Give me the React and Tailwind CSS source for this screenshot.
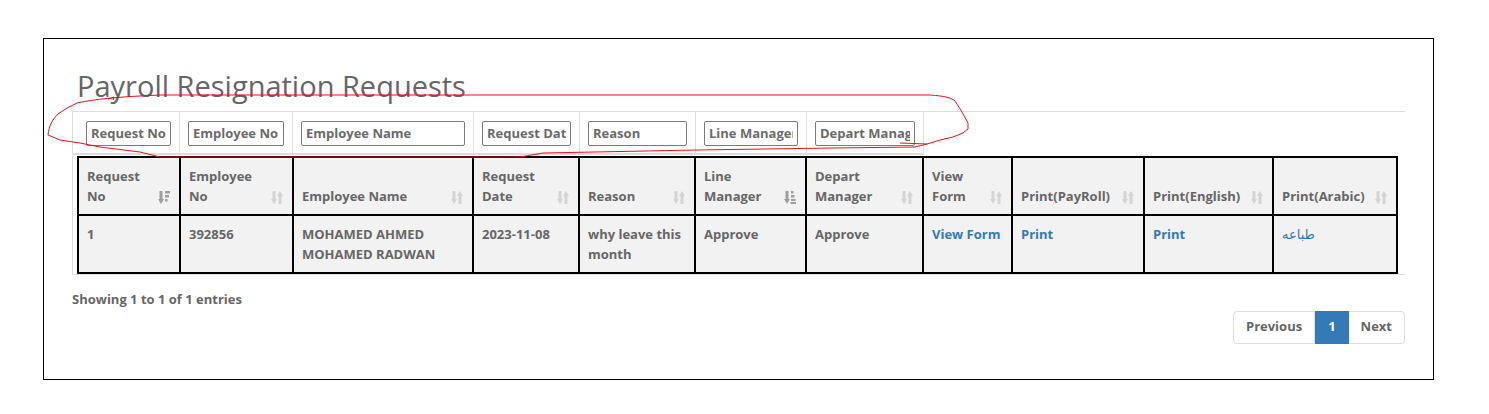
import React from 'react';

const SortBoth = () => (
  <svg width="12" height="15" viewBox="0 0 12 15" fill="#d4d4d4">
    <rect x="1.5" y="1" width="3" height="9" />
    <polygon points="0,9 6,9 3,14" />
    <rect x="7.5" y="5" width="3" height="9" />
    <polygon points="6,6 12,6 9,1" />
  </svg>
);

const SortDesc = () => (
  <svg width="12" height="15" viewBox="0 0 12 15" fill="#9e9e9e">
    <rect x="1.5" y="1" width="3" height="9" />
    <polygon points="0,9 6,9 3,14" />
    <rect x="7" y="1" width="5" height="2.5" />
    <rect x="7" y="5" width="4" height="2.5" />
    <rect x="7" y="9" width="2.5" height="2.5" />
  </svg>
);

const SortAsc = () => (
  <svg width="12" height="15" viewBox="0 0 12 15" fill="#9e9e9e">
    <rect x="1.5" y="1" width="3" height="9" />
    <polygon points="0,9 6,9 3,14" />
    <rect x="7" y="1" width="2.5" height="2.5" />
    <rect x="7" y="5" width="3.5" height="2.5" />
    <rect x="7" y="9" width="4.5" height="2" />
    <rect x="6.5" y="12" width="5.5" height="2" />
  </svg>
);

const columns = [
  { label: 'Request No', width: 102, icon: <SortDesc /> },
  { label: 'Employee No', width: 113 },
  { label: 'Employee Name', width: 180 },
  { label: 'Request Date', width: 106 },
  { label: 'Reason', width: 116 },
  { label: 'Line Manager', width: 111, icon: <SortAsc /> },
  { label: 'Depart Manager', width: 117 },
  { label: 'View Form', width: 89 },
  { label: 'Print(PayRoll)', width: 132 },
  { label: 'Print(English)', width: 129 },
  { label: 'Print(Arabic)', width: 124 },
];

const filters = [
  { ph: 'Request No', w: 'w-[107px]', first: true },
  { ph: 'Employee No', w: 'w-[113px]' },
  { ph: 'Employee Name', w: 'w-[181px]' },
  { ph: 'Request Date', w: 'w-[106px]' },
  { ph: 'Reason', w: 'w-[116px]' },
  { ph: 'Line Manager', w: 'w-[111px]' },
  { ph: 'Depart Manager', w: 'w-[117px]' },
];

export default function App() {
  return (
    <div className="relative w-[1489px] h-[414px] bg-white overflow-hidden font-['Open_Sans','DejaVu_Sans',sans-serif] text-[#666]">
      <div className="ml-[43px] mt-[38px] w-[1391px] h-[342px] border border-black px-[28px]">
        <h1 className="mt-[30px] mb-[9px] pl-[5px] text-[29px] leading-[33px] font-medium text-[#666]">
          Payroll Resignation Requests
        </h1>

        <div className="border-t border-l border-b border-[#ddd]">
          {/* filter row */}
          <div className="flex">
            {filters.map((f) => (
              <div
                key={f.ph}
                className={`${f.w} shrink-0 border-r border-b-2 border-[#ddd] pt-[8px] pb-[7px] pr-[8px] ${f.first ? 'pl-[13px]' : 'pl-[8px]'}`}
              >
                <input
                  type="text"
                  placeholder={f.ph}
                  className="w-full h-[25px] border border-[#7a7a7a] rounded-[2px] px-[4px] text-[13px] font-bold text-[#666] placeholder:text-[#6b6b6b] outline-none"
                />
              </div>
            ))}
          </div>

          {/* data table */}
          <table className="ml-[4px] mt-px w-[1321px] table-fixed border-collapse border-2 border-black text-[13px] font-bold leading-[20px]">
            <colgroup>
              {columns.map((c) => (
                <col key={c.label} style={{ width: c.width }} />
              ))}
            </colgroup>
            <thead>
              <tr>
                {columns.map((c) => (
                  <th
                    key={c.label}
                    className="relative border-2 border-black bg-[#f2f2f2] pl-[8px] pr-[28px] py-[8px] text-left align-bottom font-bold"
                  >
                    {c.label}
                    <span className="absolute right-[9px] bottom-[9px] flex">
                      {c.icon || <SortBoth />}
                    </span>
                  </th>
                ))}
              </tr>
            </thead>
            <tbody>
              <tr className="align-top">
                <td className="border-2 border-black bg-[#f2f2f2] p-[8px]">1</td>
                <td className="border-2 border-black bg-[#f2f2f2] p-[8px]">392856</td>
                <td className="border-2 border-black bg-[#f2f2f2] p-[8px]">MOHAMED AHMED MOHAMED RADWAN</td>
                <td className="border-2 border-black bg-[#f2f2f2] p-[8px]">2023-11-08</td>
                <td className="border-2 border-black bg-[#f2f2f2] p-[8px]">why leave this month</td>
                <td className="border-2 border-black bg-[#f2f2f2] p-[8px]">Approve</td>
                <td className="border-2 border-black bg-[#f2f2f2] p-[8px]">Approve</td>
                <td className="border-2 border-black bg-[#f2f2f2] p-[8px] whitespace-nowrap">
                  <a href="#" className="text-[#337ab7]">View Form</a>
                </td>
                <td className="border-2 border-black bg-[#f2f2f2] p-[8px]">
                  <a href="#" className="text-[#337ab7]">Print</a>
                </td>
                <td className="border-2 border-black bg-[#f2f2f2] p-[8px]">
                  <a href="#" className="text-[#337ab7]">Print</a>
                </td>
                <td className="border-2 border-black bg-[#f2f2f2] p-[8px]">
                  <a href="#" className="text-[#337ab7] font-normal">طباعه</a>
                </td>
              </tr>
            </tbody>
          </table>
        </div>

        <div className="flex justify-between">
          <div className="pt-[14px] text-[13px] font-bold leading-[20px]">Showing 1 to 1 of 1 entries</div>
          <div className="mt-[36px] flex h-[33px] text-[13px] font-bold">
            <button className="px-[12px] border border-[#ddd] rounded-l-[4px] text-[#666] bg-white">Previous</button>
            <button className="px-[12px] border border-[#337ab7] bg-[#337ab7] text-white">1</button>
            <button className="px-[12px] border border-[#ddd] border-l-0 rounded-r-[4px] text-[#666] bg-white">Next</button>
          </div>
        </div>
      </div>

      {/* hand-drawn red annotation */}
      <svg className="absolute inset-0 pointer-events-none" width="1489" height="414">
        <path
          d="M160 95 L930 95 C945 96 952 98 955 101 L962 112 L968 123 L968 129 L963 133 L953 137 L940 140 L927 144 L915 147 L833 148 L697 150 L543 153 L520 157 L160 157 L140 152 L100 147 L80 143 L60 140 L48 135 C49 126 52 120 58 114 L67 108 L77 103 C95 99 120 97 140 96 Z"
          fill="none"
          stroke="#e8101c"
          strokeWidth="1"
        />
        <path d="M900 143 L927 144" fill="none" stroke="#e8101c" strokeWidth="1" />
        <path d="M108 99 L114 97 L113 100" fill="none" stroke="#e8101c" strokeWidth="1" />
      </svg>
    </div>
  );
}
